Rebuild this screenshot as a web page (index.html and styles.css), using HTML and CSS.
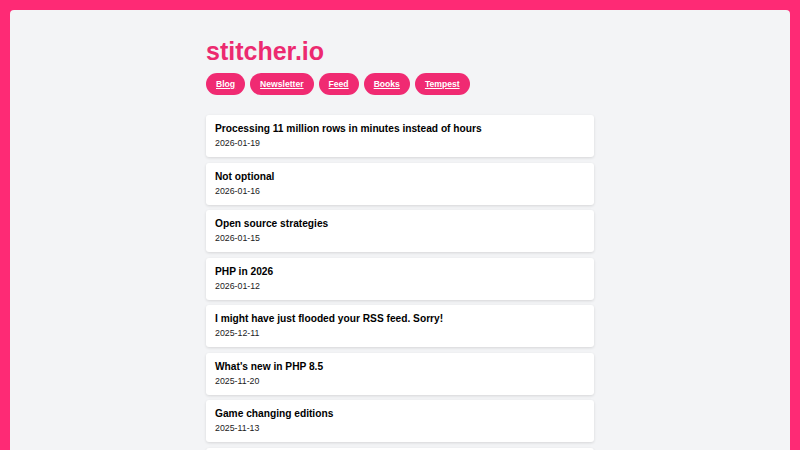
FILE: index.html
```html
<!DOCTYPE html>
<html lang="en">
<head>
    <meta charset="UTF-8">
    <meta name="viewport" content="width=device-width, initial-scale=1.0">
    <title>stitcher.io</title>
    <link rel="stylesheet" href="styles.css">
</head>
<body>

    <div class="frame">
        <main class="content">
            <h1 class="logo">stitcher.io</h1>

            <!-- Top navigation -->
            <nav class="nav">
                <a href="#">Blog</a>
                <a href="#">Newsletter</a>
                <a href="#">Feed</a>
                <a href="#">Books</a>
                <a href="#">Tempest</a>
            </nav>

            <!-- Post list -->
            <div class="posts">
                <a class="post" href="#">
                    <h2>Processing 11 million rows in minutes instead of hours</h2>
                    <span class="date">2026-01-19</span>
                </a>
                <a class="post" href="#">
                    <h2>Not optional</h2>
                    <span class="date">2026-01-16</span>
                </a>
                <a class="post" href="#">
                    <h2>Open source strategies</h2>
                    <span class="date">2026-01-15</span>
                </a>
                <a class="post" href="#">
                    <h2>PHP in 2026</h2>
                    <span class="date">2026-01-12</span>
                </a>
                <a class="post" href="#">
                    <h2>I might have just flooded your RSS feed. Sorry!</h2>
                    <span class="date">2025-12-11</span>
                </a>
                <a class="post" href="#">
                    <h2>What's new in PHP 8.5</h2>
                    <span class="date">2025-11-20</span>
                </a>
                <a class="post" href="#">
                    <h2>Game changing editions</h2>
                    <span class="date">2025-11-13</span>
                </a>
                <a class="post" href="#"></a>
            </div>
        </main>
    </div>

</body>
</html>
```

FILE: styles.css
```css
html, body {
    height: 100%;
}
body {
    font-family: "Liberation Sans", Arial, sans-serif;
    background-color: #fe2a75;
    margin: 0;
    padding: 10px;
    box-sizing: border-box;
    overflow: hidden;
}
.frame {
    background-color: #f3f4f6;
    border-radius: 4px;
    min-height: 100%;
}
.content {
    width: 388px;
    margin: 0 auto;
    padding-top: 27px;
}
.logo {
    margin: 0;
    font-size: 25px;
    line-height: 28px;
    color: #ec2a70;
}
.nav {
    display: flex;
    gap: 5px;
    margin-top: 8px;
}
.nav a {
    background-color: #f02a72;
    color: #fff;
    font-size: 8.6px;
    font-weight: bold;
    line-height: 22px;
    padding: 0 10px;
    border-radius: 11px;
}
.posts {
    display: flex;
    flex-direction: column;
    gap: 5.5px;
    margin-top: 20px;
}
.post {
    display: block;
    background-color: #fff;
    border-radius: 3px;
    box-shadow: 0 1px 3px rgba(0,0,0,0.12);
    padding: 7px 9px;
    height: 42px;
    flex-shrink: 0;
    box-sizing: border-box;
    color: #000;
    text-decoration: none;
}
.post h2 {
    margin: 0;
    font-size: 10.2px;
    line-height: 14px;
}
.date {
    display: block;
    font-size: 8.8px;
    line-height: 14px;
    color: #1a1a1a;
}
```
